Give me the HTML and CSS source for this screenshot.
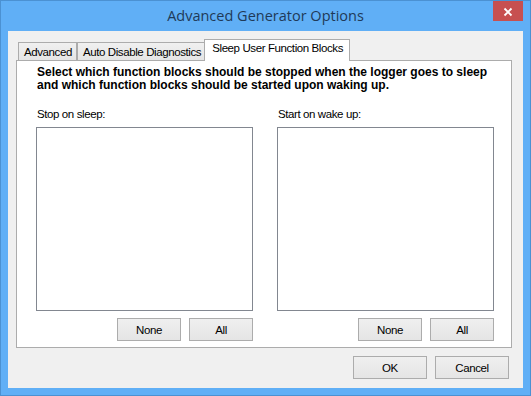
FILE: index.html
```html
<!DOCTYPE html>
<html>
<head>
	<meta charset="utf-8">
	<title>Advanced Generator Options</title>
	<link rel="stylesheet" href="styles.css">
</head>
<body>

<div class="window">
	<div class="titlebar">
		<span class="title">Advanced Generator Options</span>
		<button class="close" title="Close">
			<svg width="30" height="20" viewBox="0 0 30 20">
				<path d="M11.5 7.5 L18.5 14.5 M18.5 7.5 L11.5 14.5" stroke="#fff" stroke-width="1.8" fill="none"/>
			</svg>
		</button>
	</div>

	<div class="client">
		<div class="tabs">
			<div class="tab">Advanced</div>
			<div class="tab">Auto Disable Diagnostics</div>
			<div class="tab active">Sleep User Function Blocks</div>
		</div>

		<div class="panel">
			<p class="intro">
				Select which function blocks should be stopped when the logger goes to sleep<br>
				and which function blocks should be started upon waking up.
			</p>

			<div class="lists">
				<div class="col">
					<div class="label">Stop on sleep:</div>
					<div class="listbox"></div>
					<div class="col-buttons">
						<button class="btn btn-small">None</button>
						<button class="btn btn-small">All</button>
					</div>
				</div>
				<div class="col">
					<div class="label">Start on wake up:</div>
					<div class="listbox"></div>
					<div class="col-buttons">
						<button class="btn btn-small">None</button>
						<button class="btn btn-small">All</button>
					</div>
				</div>
			</div>
		</div>

		<div class="footer">
			<button class="btn btn-dialog">OK</button>
			<button class="btn btn-dialog">Cancel</button>
		</div>
	</div>
</div>

</body>
</html>
```

FILE: styles.css
```css
body {
	margin: 0;
	background: #f0f0f0;
	font-family: "Liberation Sans", Arial, sans-serif;
	font-size: 11.5px;
	letter-spacing: -0.4px;
	color: #000;
}

.window {
	width: 531px;
	height: 396px;
	box-sizing: border-box;
	border: 1px solid #4b91d2;
	background: #60aff6;
	display: flex;
	flex-direction: column;
}

/* --------------- */

.titlebar {
	flex-shrink: 0;
	height: 30px;
	display: grid;
	grid-template-columns: 1fr auto 1fr;
}
.title {
	grid-column: 2;
	align-self: center;
	padding-bottom: 2px;
	font-family: "Open Sans", "Noto Sans", sans-serif;
	font-size: 14.5px;
	letter-spacing: 0;
	color: #1f3a58;
}
.close {
	grid-column: 3;
	justify-self: end;
	align-self: start;
	width: 30px;
	height: 20px;
	margin-right: 7px;
	padding: 0;
	border: none;
	background: #c75050;
	display: flex;
}

/* --------------- */

.client {
	flex: 1;
	margin: 0 7px 7px 7px;
	padding: 8px 11px 0 8px;
	background: #f0f0f0;
	display: flex;
	flex-direction: column;
}

.tabs {
	position: relative;
	z-index: 1;
	flex-shrink: 0;
	display: flex;
	align-items: flex-end;
	height: 22px;
	margin-bottom: -1px;
	padding-left: 2px;
}
.tab {
	height: 17px;
	line-height: 18px;
	margin-bottom: 1px;
	padding: 0 4px 0 5px;
	border: 1px solid #acacac;
	border-bottom: none;
	background: linear-gradient(#f0f0f0, #e5e5e5);
	white-space: nowrap;
}
.tab.active {
	height: 21px;
	line-height: 17px;
	margin: 0 -2px 0 -2px;
	padding: 0 6px 0 7px;
	background: #fff;
}

.panel {
	flex-shrink: 0;
	box-sizing: border-box;
	height: 288px;
	border: 1px solid #acacac;
	background: #fff;
	padding: 5px 17px 6px 19px;
	display: flex;
	flex-direction: column;
}

.intro {
	margin: 0 0 0 1px;
	font-size: 12px;
	font-weight: bold;
	letter-spacing: 0;
	line-height: 13px;
	white-space: nowrap;
}

.lists {
	flex: 1;
	margin-top: 16px;
	display: grid;
	grid-template-columns: 217px 217px;
	column-gap: 24px;
}
.col {
	display: flex;
	flex-direction: column;
}
.label {
	line-height: 13px;
	padding-left: 1px;
}
.listbox {
	flex: 1;
	margin-top: 6px;
	border: 1px solid #828790;
	background: #fff;
}
.col-buttons {
	margin-top: 7px;
	display: flex;
	justify-content: flex-end;
	gap: 8px;
}

/* --------------- */

.btn {
	height: 23px;
	padding: 0;
	border: 1px solid #acacac;
	background: linear-gradient(#efefef, #e5e5e5);
	font-family: "Liberation Sans", Arial, sans-serif;
	font-size: 11.5px;
	letter-spacing: -0.4px;
	color: #000;
}
.btn-small {
	width: 64px;
}
.btn-dialog {
	width: 74px;
}

.footer {
	margin-top: 8px;
	padding-right: 3px;
	display: flex;
	justify-content: flex-end;
	gap: 8px;
}
```
